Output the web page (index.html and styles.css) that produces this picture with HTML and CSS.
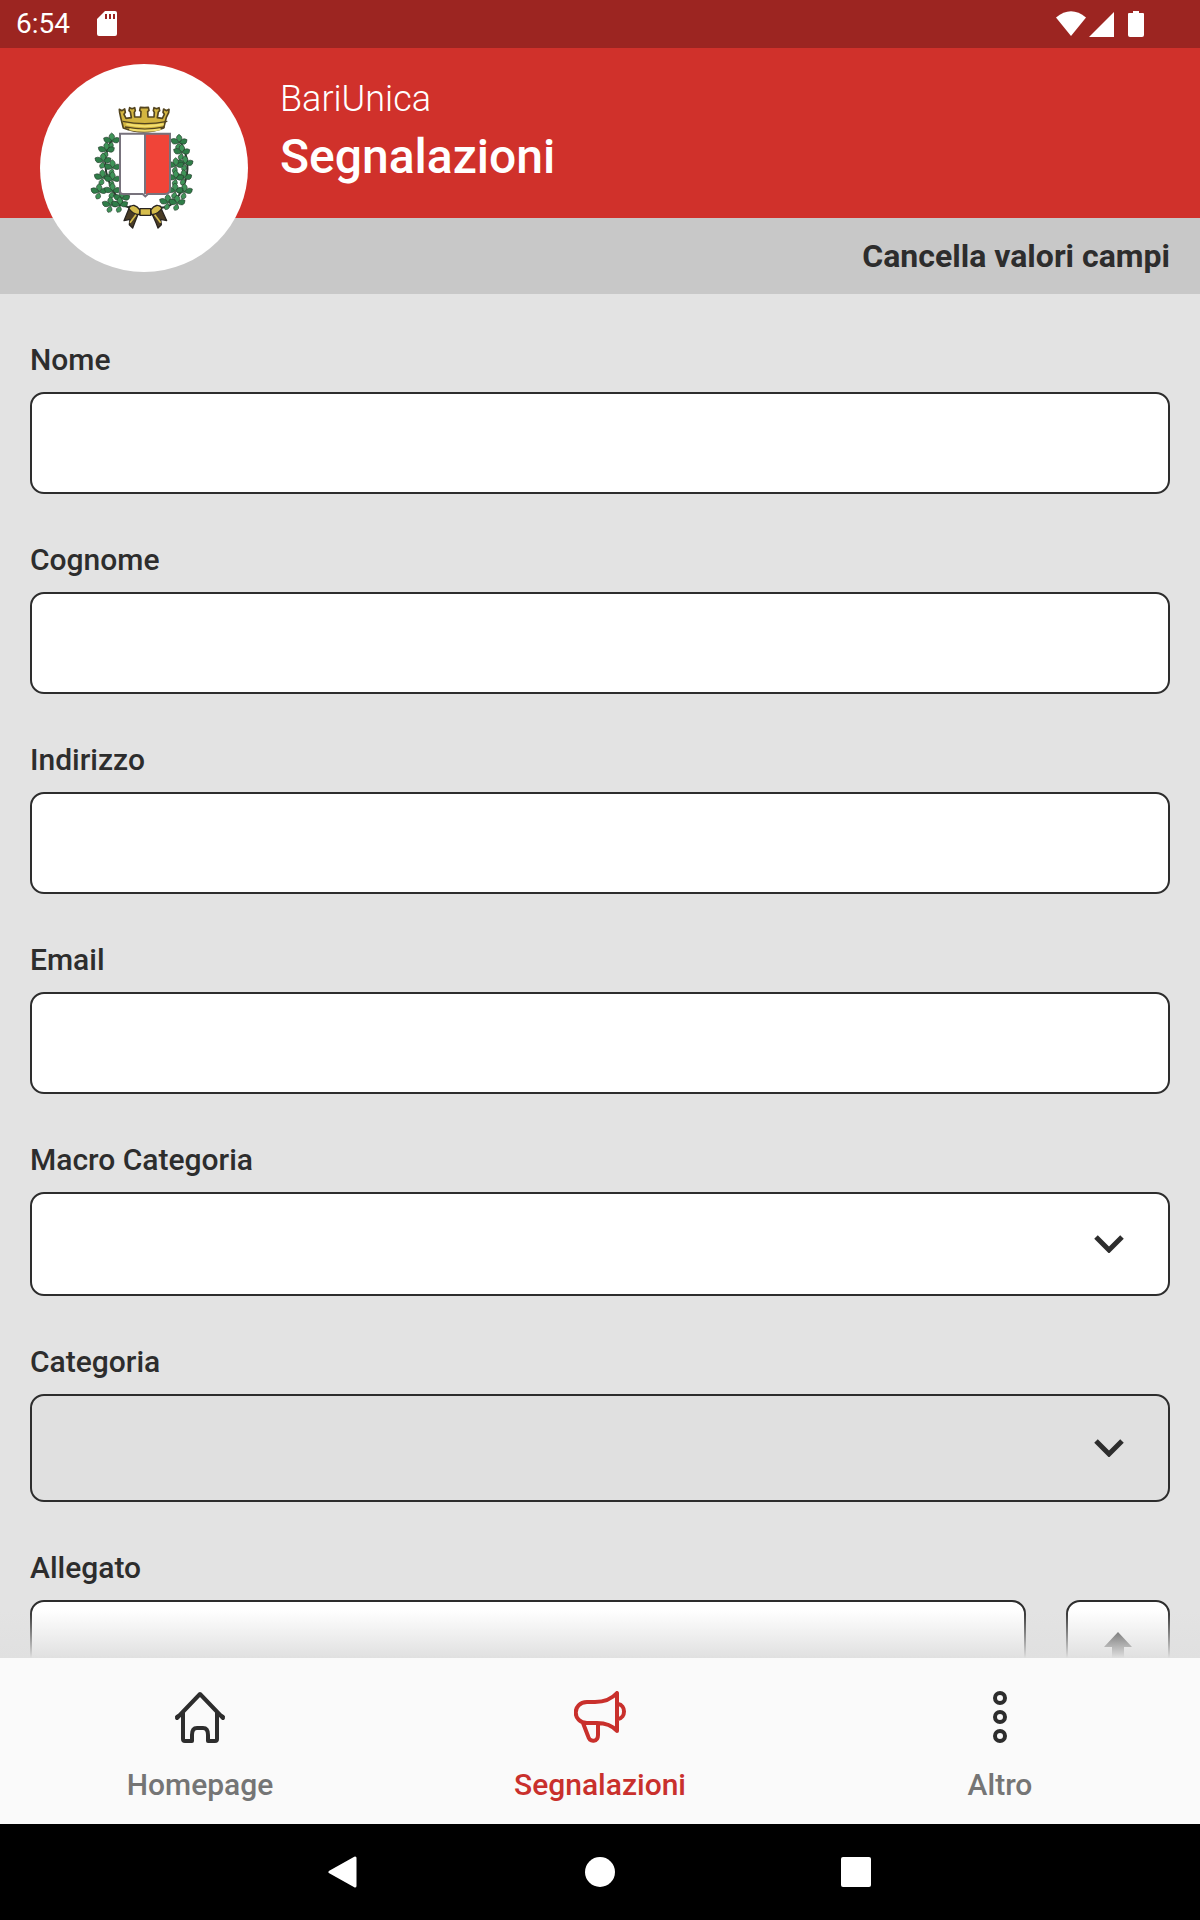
FILE: index.html
```html
<!DOCTYPE html>
<html lang="it">
<head>
  <meta charset="UTF-8" />
  <meta name="viewport" content="width=device-width, initial-scale=1.0" />
  <title>BariUnica - Segnalazioni</title>
  <link rel="stylesheet" href="styles.css">
</head>
<body>
  <div class="status-bar">
    <span class="clock">6:54</span>
    <svg class="sd" width="20" height="26" viewBox="0 0 20 26"><path fill="#fff" fill-rule="evenodd" d="M8 0h10a2 2 0 0 1 2 2v21a2 2 0 0 1-2 2H2a2 2 0 0 1-2-2V8zM8 3v5h2V3zm4 0v5h2V3zm4 0v5h2V3z"/></svg>
    <svg class="signals" width="88" height="26" viewBox="0 0 88 26" fill="#fff">
      <path d="M0 6.500Q15-6 30 6.500L15 25z"/>
      <path d="M33 26L58 1v25z"/>
      <path d="M77 0h6v2h4q1 0 1 1v21q0 2-2 2H74q-2 0-2-2V3q0-1 1-1h4z"/>
    </svg>
  </div>

  <header class="header">
    <div class="logo">
      <svg width="130" height="150" viewBox="-3 9 390 450" role="img" aria-label="Stemma di Bari">
        <defs>
          <g id="leaf" stroke="#27402f" stroke-width="2">
            <path fill="#2f7d48" d="M0 0Q-24 12-25-10Q-10-18 0 0zM0 0Q22 13 23-9Q9-17 0 0z"/>
            <path fill="#3f9458" d="M0-2Q-17-15-1-25Q16-14 0-2zM0 2Q-17 10-8 21Q11 20 0 2z"/>
          </g>
        </defs>
        <!-- branches -->
        <path d="M98 145Q58 210 90 282T152 352M298 150Q340 220 310 290T238 352" fill="none" stroke="#2b3a30" stroke-width="6"/>
        <use href="#leaf" x="96" y="154"/>
        <use href="#leaf" x="80" y="182"/>
        <use href="#leaf" x="70" y="214"/>
        <use href="#leaf" x="98" y="234"/>
        <use href="#leaf" x="68" y="264"/>
        <use href="#leaf" x="98" y="270"/>
        <use href="#leaf" x="58" y="306"/>
        <use href="#leaf" x="98" y="304"/>
        <use href="#leaf" x="126" y="326"/>
        <use href="#leaf" x="92" y="346"/>
        <use href="#leaf" x="120" y="346"/>
        <use href="#leaf" x="298" y="158"/>
        <use href="#leaf" x="306" y="188"/>
        <use href="#leaf" x="316" y="222"/>
        <use href="#leaf" x="288" y="228"/>
        <use href="#leaf" x="312" y="264"/>
        <use href="#leaf" x="288" y="266"/>
        <use href="#leaf" x="314" y="306"/>
        <use href="#leaf" x="286" y="304"/>
        <use href="#leaf" x="264" y="338"/>
        <use href="#leaf" x="292" y="340"/>
        <!-- crown -->
        <path fill="#d3b540" stroke="#54451f" stroke-width="5" stroke-linejoin="round" d="M119 68l-1-10 8 4 8-5 2 10-4 6 6 12 16-2-3-17-4-4 2-9 7 3 8-3 2 9-3 5 1 14h18l1-16-4-4 2-9 13 1 11-1 2 9-4 4 1 16h18l1-14-3-5 2-9 8 3 7-3 2 9-4 4-3 17 15 2 6-12-4-6 2-10 8 5 8-4-1 10-7 14-8 32q-60 24-121 0l-8-32z"/>
        <path fill="none" stroke="#54451f" stroke-width="4" d="M128 94q66 14 134 0M135 111q60 13 119 0"/>
        <path fill="none" stroke="#f3df70" stroke-width="6" d="M139 103q55 11 112 0M148 118q46 9 94 0"/>
        <!-- shield -->
        <path fill="#fff" d="M120 131h76v181h-68q-8 0-8-8z"/>
        <path fill="#f04438" d="M196 131h74v165q0 16-16 16h-58z"/>
        <path fill="none" stroke="#77727c" stroke-width="6" d="M120 131h150v165q0 16-16 16h-50l-8 7-8-7h-60q-8 0-8-8zM195 131v181"/>
        <!-- ribbon -->
        <g stroke="#292420" stroke-width="4" stroke-linejoin="round">
          <path fill="#4a3c25" d="M178 362l-28-14-18 44 18-4-2 16 10 10 6-16zM212 362l28-14 20 44-18-4 2 16-10 10-6-16z"/>
          <path fill="#d6bd4d" d="M180 360q-18-24-34-6 10 18 32 20zM212 360q18-24 34-6-10 18-32 20z"/>
          <path fill="#d6bd4d" d="M180 356h32v20h-32z"/>
          <path fill="none" stroke="#d6bd4d" stroke-width="5" d="M168 374l-18 24M224 374l18 24"/>
        </g>
      </svg>
    </div>
    <div class="titles">
      <p class="app-name">BariUnica</p>
      <h1 class="page-title">Segnalazioni</h1>
    </div>
  </header>

  <div class="toolbar">
    <button class="clear-btn" type="reset" form="report">Cancella valori campi</button>
  </div>

  <main class="content">
    <form class="form" id="report">
      <div class="field">
        <label for="nome">Nome</label>
        <input class="control" id="nome" type="text">
      </div>
      <div class="field">
        <label for="cognome">Cognome</label>
        <input class="control" id="cognome" type="text">
      </div>
      <div class="field">
        <label for="indirizzo">Indirizzo</label>
        <input class="control" id="indirizzo" type="text">
      </div>
      <div class="field">
        <label for="email">Email</label>
        <input class="control" id="email" type="email">
      </div>
      <div class="field">
        <label for="macro">Macro Categoria</label>
        <div class="select">
          <select class="control" id="macro"><option></option></select>
          <svg class="chevron" width="30" height="18" viewBox="0 0 30 18"><path d="M2 2l13 13L28 2"/></svg>
        </div>
      </div>
      <div class="field">
        <label for="categoria">Categoria</label>
        <div class="select">
          <select class="control" id="categoria" disabled><option></option></select>
          <svg class="chevron" width="30" height="18" viewBox="0 0 30 18"><path d="M2 2l13 13L28 2"/></svg>
        </div>
      </div>
      <div class="field">
        <label for="allegato">Allegato</label>
        <div class="attach">
          <input class="control" id="allegato" type="text" readonly>
          <button class="upload" type="button" aria-label="Carica allegato">
            <svg width="28" height="40" viewBox="0 0 28 40"><path fill="#2d2d2d" d="M14 0l14 15h-8v25H8V15H0z"/></svg>
          </button>
        </div>
      </div>
    </form>
  </main>

  <nav class="tabs">
    <a class="tab" href="#">
      <svg width="52" height="52" viewBox="0 0 52 52">
        <path d="M3 27L26 3l23 24M3 26l6-4M49 26l-6-4M9 21v27q0 2 2 2h7v-6q0-7 5-7h6q5 0 5 7v6h7q2 0 2-2V21"/>
      </svg>
      <span>Homepage</span>
    </a>
    <a class="tab active" href="#">
      <svg width="52" height="52" viewBox="0 0 52 52">
        <path d="M43 2v38Q36 32 23 32H13C-2 32-2 11 13 11h8Q35 11 43 2zM44 13c8 1 8 14 0 15M9 32l5 13c2 7 10 6 10-1V33"/>
      </svg>
      <span>Segnalazioni</span>
    </a>
    <a class="tab" href="#">
      <svg width="52" height="52" viewBox="0 0 52 52">
        <circle cx="26" cy="7" r="5"/>
        <circle cx="26" cy="26" r="5"/>
        <circle cx="26" cy="45" r="5"/>
      </svg>
      <span>Altro</span>
    </a>
  </nav>

  <div class="system-nav">
    <button type="button" aria-label="Indietro"><svg width="32" height="32" viewBox="0 0 32 32"><path d="M27 2v28L2 16z" fill="#fff" stroke="#fff" stroke-width="3" stroke-linejoin="round"/></svg></button>
    <button type="button" aria-label="Home"><svg width="32" height="32" viewBox="0 0 32 32"><circle cx="16" cy="16" r="15" fill="#fff"/></svg></button>
    <button type="button" aria-label="Recenti"><svg width="32" height="32" viewBox="0 0 32 32"><rect x="1" y="1" width="30" height="30" rx="2" fill="#fff"/></svg></button>
  </div>
</body>
</html>
```
FILE: styles.css
```css
:root {
  --red: #d0312b;
  --dark-red: #9c2521;
  --ink: #2d2d2d;
  --bg: #e3e3e3;
}

* { box-sizing: border-box; }

body {
  margin: 0;
  height: 100vh;
  display: flex;
  flex-direction: column;
  background: var(--bg);
  color: var(--ink);
  font-family: Roboto, "Noto Sans", sans-serif;
}

button, input, select { font: inherit; color: inherit; }
button { cursor: pointer; }
svg { display: block; }

/* Status bar */
.status-bar {
  flex: none;
  display: flex;
  align-items: center;
  height: 48px;
  padding: 0 56px 0 16px;
  background: var(--dark-red);
  color: #fff;
}
.clock { font-size: 28px; line-height: 32px; }
.sd { margin-left: 27px; }
.signals { margin-left: auto; }

/* Header */
.header {
  flex: none;
  display: flex;
  align-items: flex-start;
  gap: 32px;
  height: 170px;
  padding: 16px 40px 0;
  background: var(--red);
  color: #fff;
}
.logo {
  position: relative;
  z-index: 1;
  flex: none;
  display: flex;
  align-items: center;
  justify-content: center;
  width: 208px;
  height: 208px;
  border-radius: 50%;
  background: #fff;
}
.titles { padding-top: 12px; }
.app-name {
  margin: 0;
  font-size: 36px;
  font-weight: 300;
  line-height: 46px;
}
.page-title {
  margin: 0;
  font-size: 48px;
  font-weight: 500;
  line-height: 70px;
}

.toolbar {
  flex: none;
  display: flex;
  align-items: center;
  justify-content: flex-end;
  height: 76px;
  padding: 0 30px;
  background: #c8c8c8;
}
.clear-btn {
  padding: 0;
  border: 0;
  background: none;
  font-size: 32px;
  font-weight: 700;
  line-height: 40px;
}

/* Form */
.content {
  flex: 1;
  min-height: 0;
  overflow: hidden;
}
.form {
  display: flex;
  flex-direction: column;
  gap: 46px;
  padding: 46px 30px;
}
.field {
  display: flex;
  flex-direction: column;
  gap: 12px;
}
.field label {
  font-size: 30px;
  font-weight: 500;
  line-height: 40px;
}
.control {
  display: block;
  width: 100%;
  height: 102px;
  padding: 0 24px;
  border: 2px solid var(--ink);
  border-radius: 14px;
  background: #fff;
  font-size: 30px;
  appearance: none;
}
.select { position: relative; }
.select .control { height: 104px; padding-right: 96px; }
.select .control:disabled {
  height: 108px;
  background: #e0e0e0;
  opacity: 1;
}
.chevron {
  position: absolute;
  top: 50%;
  right: 46px;
  transform: translateY(-50%);
  pointer-events: none;
}
.chevron path {
  fill: none;
  stroke: var(--ink);
  stroke-width: 5;
}
.attach {
  display: flex;
  gap: 40px;
}
.attach .control { flex: 1; height: 104px; }
.upload {
  flex: none;
  display: flex;
  align-items: center;
  justify-content: center;
  width: 104px;
  height: 104px;
  padding: 0;
  border: 2px solid var(--ink);
  border-radius: 14px;
  background: #fff;
}

/* Bottom tabs */
.tabs {
  position: relative;
  flex: none;
  display: flex;
  height: 166px;
  background: #fafafa;
}
/* fade of the scrolling content */
.tabs::before {
  content: "";
  position: absolute;
  left: 0;
  right: 0;
  bottom: 100%;
  height: 48px;
  background: linear-gradient(rgba(224,224,224,0), #e0e0e0);
  pointer-events: none;
}
.tab {
  flex: 1;
  display: flex;
  flex-direction: column;
  align-items: center;
  gap: 24px;
  padding-top: 33px;
  color: #757575;
  font-size: 30px;
  font-weight: 500;
  line-height: 36px;
  text-decoration: none;
}
.tab svg {
  fill: none;
  stroke: var(--ink);
  stroke-width: 4;
  stroke-linecap: round;
  stroke-linejoin: round;
}
.tab.active { color: #c9302c; }
.tab.active svg { stroke: #c9302c; }

/* Android navigation */
.system-nav {
  flex: none;
  display: flex;
  justify-content: center;
  height: 96px;
  background: #000;
}
.system-nav button {
  display: flex;
  align-items: center;
  justify-content: center;
  width: 256px;
  padding: 0;
  border: 0;
  background: none;
}
```
